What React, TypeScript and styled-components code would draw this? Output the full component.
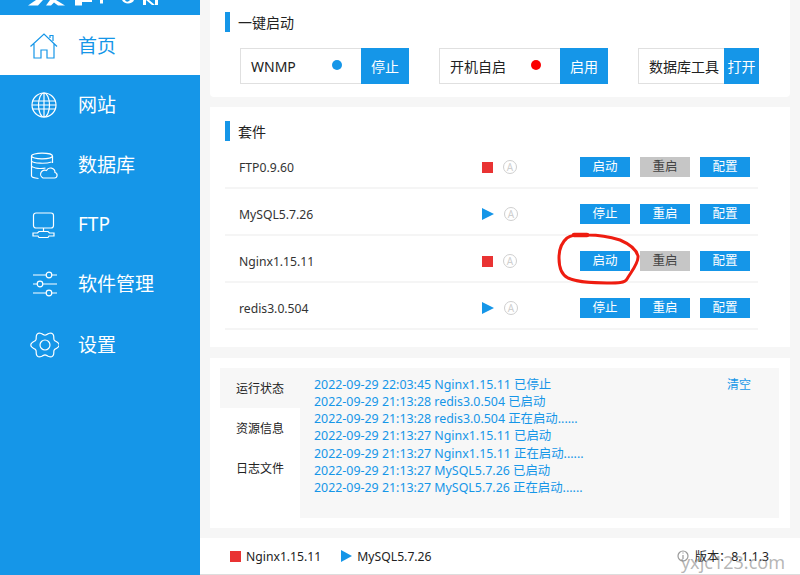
import React from 'react';
import styled, { createGlobalStyle } from 'styled-components';

const GlobalStyle = createGlobalStyle`
	html, body {
		margin: 0;
		padding: 0;
		height: 575px;
		overflow: hidden;
		background: #f6f6f6;
		font-family: "Noto Sans", "Noto Sans CJK SC", sans-serif;
	}
	* {
		box-sizing: border-box;
	}
`;

const BLUE = '#1596e8';

const Page = styled.div`
	position: relative;
	display: flex;
	width: 800px;
	height: 575px;
	overflow: hidden;
`;

const Sidebar = styled.aside`
	flex: none;
	width: 200px;
	height: 575px;
	background: ${BLUE};
`;

const LogoBar = styled.div`
	height: 15px;
	padding-left: 28px;
	overflow: hidden;
`;

const LogoMark = styled.svg`
	display: block;
	width: 140px;
	height: 15px;
	fill: #fff;
`;

const NavActive = styled.div`
	display: flex;
	align-items: center;
	height: 60px;
	padding: 2px 0 0 29px;
	background: #fff;
	color: ${BLUE};
`;

const NavItem = styled.div<{ $height: number }>`
	display: flex;
	align-items: center;
	height: ${({ $height }) => $height}px;
	padding-left: 29px;
	color: #fff;
`;

const NavIcon = styled.svg`
	flex: none;
	width: 30px;
	height: 30px;
	fill: none;
	stroke: currentColor;
	stroke-width: 1.2;
`;

const NavLabel = styled.span`
	margin: 0 0 2px 19px;
	font-size: 19px;
`;

const Main = styled.main`
	display: flex;
	flex: 1;
	flex-direction: column;
	height: 575px;
`;

const Card = styled.section<{ $height: number; $top: number }>`
	flex: none;
	width: 580px;
	height: ${({ $height }) => $height}px;
	margin: ${({ $top }) => $top}px 0 0 10px;
	background: #fff;
`;

const QuickCard = styled(Card)`
	padding: 12px 0 0 15px;
	border-radius: 0 0 4px 4px;
`;

const SectionTitle = styled.h2`
	display: flex;
	align-items: center;
	height: 20px;
	margin: 0;
	padding-left: 8px;
	border-left: 5px solid ${BLUE};
	font-size: 14px;
	font-weight: 400;
	color: #222;
`;

const QuickRow = styled.div`
	display: flex;
	gap: 30px;
	margin: 16px 0 0 15px;
`;

const QuickGroup = styled.div<{ $width: number }>`
	display: flex;
	width: ${({ $width }) => $width}px;
	height: 36px;
`;

const QuickField = styled.div<{ $right: number }>`
	display: flex;
	flex: 1;
	align-items: center;
	justify-content: space-between;
	min-width: 0;
	padding: 0 ${({ $right }) => $right}px 0 10px;
	border: 1px solid #e0e0e0;
	border-right: none;
	font-size: 14px;
	color: #222;
	white-space: nowrap;
`;

const Dot = styled.span<{ $color: string }>`
	width: 10px;
	height: 10px;
	margin-top: -3px;
	border-radius: 50%;
	background: ${({ $color }) => $color};
`;

const QuickButton = styled.button<{ $width: number }>`
	flex: none;
	width: ${({ $width }) => $width}px;
	padding: 0;
	border: none;
	background: ${BLUE};
	color: #fff;
	font: inherit;
	font-size: 14px;
`;

const SuiteCard = styled(Card)`
	padding: 14px 0 0 15px;
`;

const SuiteList = styled.div`
	width: 533px;
	margin-top: 1px;
`;

const SuiteRow = styled.div`
	display: flex;
	align-items: center;
	height: 47px;
	padding: 5px 0 0 14px;
	border-bottom: 2px solid #f5f5f5;
`;

const SuiteName = styled.span`
	width: 243px;
	font-size: 12.2px;
	color: #333;
`;

const StopIcon = styled.span<{ $size: number }>`
	flex: none;
	width: ${({ $size }) => $size}px;
	height: ${({ $size }) => $size}px;
	background: #e93333;
`;

const PlayIcon = styled.span<{ $w: number; $h: number }>`
	flex: none;
	width: 0;
	height: 0;
	border-left: ${({ $w }) => $w}px solid ${BLUE};
	border-top: ${({ $h }) => $h}px solid transparent;
	border-bottom: ${({ $h }) => $h}px solid transparent;
`;

const AutoMark = styled.span`
	display: flex;
	flex: none;
	align-items: center;
	justify-content: center;
	width: 14px;
	height: 14px;
	margin-left: 10px;
	border: 1px solid #cfcfcf;
	border-radius: 50%;
	font-size: 10px;
	line-height: 1;
	color: #cfcfcf;
`;

const Actions = styled.div<{ $shift: number }>`
	display: flex;
	gap: 10px;
	margin-left: ${({ $shift }) => $shift}px;
`;

const ActionButton = styled.button<{ $off?: boolean }>`
	width: 50px;
	height: 20px;
	padding: 0;
	border: none;
	background: ${({ $off }) => ($off ? '#c6c6c6' : BLUE)};
	color: ${({ $off }) => ($off ? '#444' : '#fff')};
	font: inherit;
	font-size: 12.5px;
	line-height: 20px;
`;

const LogCard = styled(Card)`
	padding: 10px 11px 10px 10px;
`;

const LogBox = styled.div`
	display: flex;
	height: 150px;
	background: #f7f7f7;
`;

const Tabs = styled.div`
	display: flex;
	flex: none;
	flex-direction: column;
	width: 80px;
`;

const Tab = styled.div<{ $active?: boolean; $height: number }>`
	display: flex;
	align-items: center;
	justify-content: center;
	height: ${({ $height }) => $height}px;
	background: ${({ $active }) => ($active ? 'transparent' : '#fff')};
	font-size: 12px;
	color: #222;
`;

const TabFill = styled.div`
	flex: 1;
	background: #fff;
`;

const LogLines = styled.div`
	flex: 1;
	padding: 8px 0 0 14px;
	font-size: 12.4px;
	line-height: 17.15px;
	color: ${BLUE};
`;

const ClearLink = styled.span`
	flex: none;
	width: 52px;
	padding-top: 8px;
	font-size: 12px;
	line-height: 17px;
	color: ${BLUE};
`;

const Footer = styled.footer`
	display: flex;
	flex: none;
	align-items: center;
	height: 37px;
	margin-top: 10px;
	padding: 0 12px 0 30px;
	background: #fff;
	border-bottom: 1px solid #ddd;
	font-size: 12.2px;
	color: #222;
`;

const FooterItem = styled.span`
	margin: 0 20px 0 5px;
`;

const Version = styled.span`
	margin-left: auto;
	margin-right: 19px;
`;

const Scribble = styled.svg`
	position: absolute;
	left: 550px;
	top: 225px;
	width: 100px;
	height: 70px;
	fill: none;
	stroke: #ee1c10;
	stroke-width: 3;
	stroke-linecap: round;
	stroke-linejoin: round;
`;

const ScribbleBlob = styled.path`
	stroke-width: 4.5;
`;

const Watermark = styled.span`
	position: absolute;
	right: 15px;
	bottom: 3px;
	font-size: 18px;
	line-height: 20px;
	color: rgba(120, 120, 120, 0.55);
`;

const WatermarkInfo = styled.svg`
	position: absolute;
	left: 677px;
	top: 550px;
	width: 12px;
	height: 12px;
	fill: none;
	stroke: rgba(120, 120, 120, 0.75);
	stroke-width: 1.2;
`;

const suites = [
	{ name: 'FTP0.9.60', running: false },
	{ name: 'MySQL5.7.26', running: true },
	{ name: 'Nginx1.15.11', running: false },
	{ name: 'redis3.0.504', running: true }
];

const logs = [
	'2022-09-29 22:03:45 Nginx1.15.11 已停止',
	'2022-09-29 21:13:28 redis3.0.504 已启动',
	'2022-09-29 21:13:28 redis3.0.504 正在启动......',
	'2022-09-29 21:13:27 Nginx1.15.11 已启动',
	'2022-09-29 21:13:27 Nginx1.15.11 正在启动......',
	'2022-09-29 21:13:27 MySQL5.7.26 已启动',
	'2022-09-29 21:13:27 MySQL5.7.26 正在启动......'
];

// six soft lobes, slightly flattened like the gear in the sidebar
const gearPath = Array.from({ length: 72 }, (_, i) => {
	const angle = (i / 72) * Math.PI * 2;
	const radius = 12.4 + 1.8 * Math.cos(angle * 6);
	const x = 16 + radius * Math.cos(angle);
	const y = 15 + radius * 0.94 * Math.sin(angle);
	return `${i === 0 ? 'M' : 'L'}${x.toFixed(2)} ${y.toFixed(2)}`;
}).join(' ');

const HomeIcon = () => (
	<NavIcon viewBox="0 0 30 30">
		<path d="M1.5 15.5 15 3l13 12.5M5 13v14h7v-8h6v8h7V13M21 7V4.5h3v5.5" />
	</NavIcon>
);

const GlobeIcon = () => (
	<NavIcon viewBox="0 0 30 30">
		<circle cx="15" cy="15" r="12" />
		<ellipse cx="15" cy="15" rx="5.5" ry="12" />
		<path d="M15 3v24M3.5 11h23M3.5 19h23M3 15h24" />
	</NavIcon>
);

const DatabaseIcon = () => (
	<NavIcon viewBox="0 0 30 30">
		<ellipse cx="13" cy="6" rx="10.5" ry="2.8" />
		<path d="M2.5 6v20c0 1 2 2 7 2.5M23.500 6v7M2.500 16c2 2.500 10 3 14 2M2.500 11c2 2.500 14 3 20 1" />
		<path d="M14 28h11.500a2.800 2.800 0 0 0 .5-5.500 4.500 4.500 0 0 0-8.500-2 3.500 3.500 0 0 0-3.500 7.500z" />
	</NavIcon>
);

const FtpIcon = () => (
	<NavIcon viewBox="0 0 30 30">
		<rect x="4.500" y="3" width="20" height="15" rx="2.500" />
		<path d="M14.500 18v3.500M10 21.500h9l1.500 1.500h4.500v3h-5l-1 1.500h-9l-1-1.500H4v-3h4.500z" />
	</NavIcon>
);

const SlidersIcon = () => (
	<NavIcon viewBox="0 0 30 30">
		<path d="M4 6h13M22.500 6H28M4 15h4.500M14 15h14M4 24h13M22.500 24H28" />
		<circle cx="20" cy="6" r="2.800" />
		<circle cx="11" cy="15" r="2.800" />
		<circle cx="20" cy="24" r="2.800" />
	</NavIcon>
);

const GearIcon = () => (
	<NavIcon viewBox="0 0 30 30">
		<circle cx="16" cy="15" r="5" />
		<path d={`${gearPath} Z`} />
	</NavIcon>
);

export default function App() {
	return (
		<Page>
			<GlobalStyle />
			<Sidebar>
				<LogoBar>
					<LogoMark viewBox="0 0 140 15">
						<path d="M8 0h7l-5 5.500H0z" />
						<path d="M22 0h6l9 5.500h-7l-4-3-3 3h-5z" />
						<path d="M47 0h7v5.500h-7zM54 0h10v2H54z" />
						<path d="M72 0h3v3.500h-3z" />
						<path d="M94 0h3c1 2 3 2.500 5 0h4c-1 4-10 5-12 0z" />
						<path d="M115 0h3v5h-3zM127 0h3v5h-3zM118 0h3l6 5h-3z" />
					</LogoMark>
				</LogoBar>
				<NavActive>
					<HomeIcon />
					<NavLabel>首页</NavLabel>
				</NavActive>
				<NavItem $height={60}>
					<GlobeIcon />
					<NavLabel>网站</NavLabel>
				</NavItem>
				<NavItem $height={60}>
					<DatabaseIcon />
					<NavLabel>数据库</NavLabel>
				</NavItem>
				<NavItem $height={60}>
					<FtpIcon />
					<NavLabel>FTP</NavLabel>
				</NavItem>
				<NavItem $height={57}>
					<SlidersIcon />
					<NavLabel>软件管理</NavLabel>
				</NavItem>
				<NavItem $height={66}>
					<GearIcon />
					<NavLabel>设置</NavLabel>
				</NavItem>
			</Sidebar>
			<Main>
				<QuickCard $height={97} $top={0}>
					<SectionTitle>一键启动</SectionTitle>
					<QuickRow>
						<QuickGroup $width={169}>
							<QuickField $right={19}>
								WNMP
								<Dot $color={BLUE} />
							</QuickField>
							<QuickButton $width={48}>停止</QuickButton>
						</QuickGroup>
						<QuickGroup $width={169}>
							<QuickField $right={19}>
								开机自启
								<Dot $color="#fb0000" />
							</QuickField>
							<QuickButton $width={48}>启用</QuickButton>
						</QuickGroup>
						<QuickGroup $width={121}>
							<QuickField $right={0}>数据库工具</QuickField>
							<QuickButton $width={35}>打开</QuickButton>
						</QuickGroup>
					</QuickRow>
				</QuickCard>
				<SuiteCard $height={240} $top={10}>
					<SectionTitle>套件</SectionTitle>
					<SuiteList>
						{suites.map(suite => (
							<SuiteRow key={suite.name}>
								<SuiteName>{suite.name}</SuiteName>
								{suite.running ? <PlayIcon $w={12} $h={6} /> : <StopIcon $size={11} />}
								<AutoMark>A</AutoMark>
								<Actions $shift={suite.running ? 62 : 63}>
									<ActionButton>{suite.running ? '停止' : '启动'}</ActionButton>
									<ActionButton $off={!suite.running}>重启</ActionButton>
									<ActionButton>配置</ActionButton>
								</Actions>
							</SuiteRow>
						))}
					</SuiteList>
				</SuiteCard>
				<LogCard $height={170} $top={11}>
					<LogBox>
						<Tabs>
							<Tab $active $height={40}>运行状态</Tab>
							<Tab $height={40}>资源信息</Tab>
							<Tab $height={40}>日志文件</Tab>
							<TabFill />
						</Tabs>
						<LogLines>
							{logs.map(line => (
								<div key={line}>{line}</div>
							))}
						</LogLines>
						<ClearLink>清空</ClearLink>
					</LogBox>
				</LogCard>
				<Footer>
					<StopIcon $size={11} />
					<FooterItem>Nginx1.15.11</FooterItem>
					<PlayIcon $w={11} $h={6} />
					<FooterItem>MySQL5.7.26</FooterItem>
					<Version>版本：8.1.1.3</Version>
				</Footer>
			</Main>
			<Scribble viewBox="0 0 100 70">
				<path d="M38 10C30 9 22 10 17 13 11 18 9 26 9 33 9 42 12 50 18 53 30 58 45 58 57 58 68 58 75 58 77 54 81 47 89 38 88 31 86 23 77 18 70 15 60 12 48 10 38 10" />
				<ScribbleBlob d="M24 10 37 10" />
			</Scribble>
			<WatermarkInfo viewBox="0 0 12 12">
				<circle cx="6" cy="6" r="5" />
				<path d="M6 5v4M6 2.500v1" />
			</WatermarkInfo>
			<Watermark>yxjc123.com</Watermark>
		</Page>
	);
}
